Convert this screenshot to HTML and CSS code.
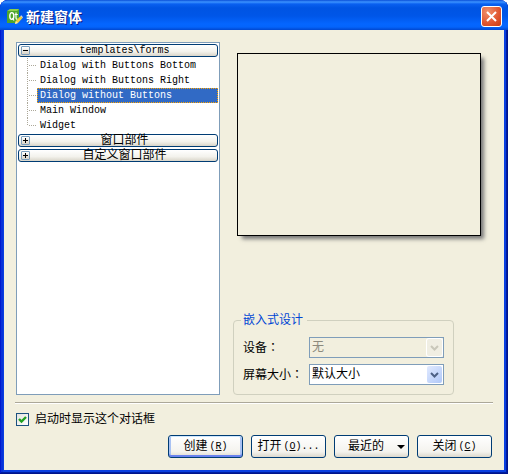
FILE: index.html
```
<!DOCTYPE html>
<html lang="zh-CN">
<head>
  <meta charset="UTF-8">
  <title>新建窗体</title>
  <link rel="stylesheet" href="styles.css">
</head>
<body>
<div class="window">
  <div class="titlebar">
    <svg class="logo" width="16" height="16" viewBox="0 0 16 16">
      <path d="M1 2 L3 0 H12 V12 L10 14 H0 V2 Z" fill="#4fa52c"/>
      <path d="M0 2 L3 0 H12 L10 2 Z" fill="#8ccf4d"/>
      <ellipse cx="4.8" cy="7" rx="2" ry="3.4" fill="none" stroke="#fff" stroke-width="1.4"/>
      <path d="M5.5 9 L7 11.5 M9 3.5 V9 Q9 10.3 10.5 10 M7.6 5.5 H10.8" fill="none" stroke="#fff" stroke-width="1.2"/>
      <path d="M8 15 L8.8 12 L13.5 7 L15.5 9 L11 14 Z" fill="#f2cf3c"/>
      <path d="M13.5 7 L14.3 6.3 L16 8.2 L15.5 9 Z" fill="#e8e4d8"/>
      <path d="M8 15 L8.8 12 L11 14 Z" fill="#f8e9b8"/>
    </svg>
    <h1>新建窗体</h1>
    <button class="close" type="button" aria-label="关闭窗口">
      <svg width="11" height="11" viewBox="0 0 11 11">
        <path d="M1 1 L10 10 M10 1 L1 10" stroke="#fff" stroke-width="2"/>
      </svg>
    </button>
  </div>

  <form class="content">
    <div class="main">
      <ul class="tree">
        <li>
          <button class="group" type="button"><i class="sign"></i><span class="en">templates\forms</span></button>
          <ul class="items">
            <li><button type="button">Dialog with Buttons Bottom</button></li>
            <li><button type="button">Dialog with Buttons Right</button></li>
            <li><button class="current" type="button">Dialog without Buttons</button></li>
            <li><button type="button">Main Window</button></li>
            <li><button type="button">Widget</button></li>
          </ul>
        </li>
        <li><button class="group" type="button"><i class="sign plus"></i><span>窗口部件</span></button></li>
        <li><button class="group" type="button"><i class="sign plus"></i><span>自定义窗口部件</span></button></li>
      </ul>

      <div class="side">
        <div class="preview"></div>
        <fieldset class="design">
          <legend>嵌入式设计</legend>
          <div class="fields">
            <label for="device">设备<span class="colon" lang="zh-TW">：</span></label>
            <div class="combo">
              <select id="device" disabled><option>无</option></select>
              <svg class="arrow off" width="15" height="17" viewBox="0 0 15 17">
                <path d="M4 7 L7.5 10.5 L11 7" fill="none" stroke="#c9c7ba" stroke-width="2"/>
              </svg>
            </div>
            <label for="screen">屏幕大小<span class="colon" lang="zh-TW">：</span></label>
            <div class="combo">
              <select id="screen"><option>默认大小</option></select>
              <svg class="arrow" width="15" height="17" viewBox="0 0 15 17">
                <path d="M4 7 L7.5 10.5 L11 7" fill="none" stroke="#4d6185" stroke-width="2"/>
              </svg>
            </div>
          </div>
        </fieldset>
      </div>
    </div>

    <hr>

    <label class="check"><input type="checkbox" checked>启动时显示这个对话框</label>

    <div class="buttons">
      <button class="btn default" type="button">创建<span class="en">(<u>R</u>)</span></button>
      <button class="btn" type="button">打开<span class="en">(<u>O</u>)...</span></button>
      <button class="btn menu" type="button"><span>最近的</span><i class="down"></i></button>
      <button class="btn" type="button">关闭<span class="en">(<u>C</u>)</span></button>
    </div>
  </form>
</div>
</body>
</html>
```
FILE: styles.css
```
* {
  margin: 0;
  padding: 0;
  box-sizing: border-box;
}

body {
  background: #fff;
  font: 12px/15px "Liberation Sans", "Noto Sans CJK SC", sans-serif;
  color: #000;
}

ul {
  list-style: none;
}

button, select, input {
  font: inherit;
  color: inherit;
}

svg {
  display: block;
}

.en {
  font-family: "Liberation Mono", monospace;
  font-size: 10px;
}

/* 冒号居中显示 */
.colon {
  font-family: "Noto Sans CJK TC", sans-serif;
}

.window {
  display: flex;
  flex-direction: column;
  min-height: 100vh;
  padding: 0 4px 4px;
  background: #0a3fe0;
  box-shadow: inset -1px -1px #00138c, inset 1px 0 #0019cf, inset -2px -2px #001ea0, inset 3px 0 #0831d9;
  border-radius: 8px 8px 0 0;
}

/* 标题栏 */
.titlebar {
  display: flex;
  align-items: center;
  height: 30px;
  margin: 0 -4px;
  padding: 3px 6px 0 7px;
  border-radius: 8px 8px 0 0;
  background: linear-gradient(#0a4fd8 0, #3c93ff 2px, #0a60f0 4px, #0054e3 8px, #0056e8 16px, #0466ff 24px, #0464fb 27px, #0047d0 30px);
}

.titlebar h1 {
  flex: 1;
  margin-left: 3px;
  font-size: 14px;
  line-height: 20px;
  font-weight: bold;
  color: #fff;
  text-shadow: 1px 1px #0a1883;
}

.close {
  display: grid;
  place-items: center;
  width: 21px;
  height: 21px;
  border: 1px solid #fff;
  border-radius: 3px;
  background: radial-gradient(circle at 30% 25%, #f0906c, #e0552f 60%, #c63c12);
}

.content {
  flex: 1;
  display: flex;
  flex-direction: column;
  padding: 12px 11px 12px;
  background: #f2efde;
}

.main {
  flex: 1;
  display: flex;
  gap: 13px;
  padding-left: 1px;
}

/* 左侧模板树 */
.tree {
  flex: 0 1 204px;
  padding: 0 1px;
  border: 1px solid #7f9db9;
  background: #fff;
}

.group {
  display: flex;
  align-items: center;
  width: 100%;
  height: 13px;
  margin: 1px 0;
  padding: 0 2px;
  border: 1px solid #003c74;
  border-radius: 3px;
  background: linear-gradient(#fff, #f3f2ec 60%, #d9d5c9);
  line-height: 13px;
}

.tree > li {
  display: flow-root;
}

.group span {
  flex: 1;
  padding-left: 4px;
  white-space: nowrap;
}

.sign {
  width: 9px;
  height: 9px;
  border: 1px solid #7b9ebd;
  border-radius: 1px;
  background: linear-gradient(#000, #000) center / 5px 1px no-repeat, linear-gradient(#fff, #d8d3c7);
}

.sign.plus {
  background: linear-gradient(#000, #000) center / 5px 1px no-repeat, linear-gradient(#000, #000) center / 1px 5px no-repeat, linear-gradient(#fff, #d8d3c7);
}

.items {
  padding-left: 9px;
}

.items li {
  padding-left: 10px;
  background:
    repeating-linear-gradient(#aca899 0 1px, #fff 1px 2px) 0 0 / 1px 15px no-repeat,
    repeating-linear-gradient(90deg, #aca899 0 1px, #fff 1px 2px) 0 7px / 10px 1px no-repeat;
}

.items li:last-child {
  background-size: 1px 8px, 10px 1px;
}

.items button {
  display: block;
  width: 100%;
  height: 15px;
  padding-left: 2px;
  border: 1px solid transparent;
  background: none;
  font: 10px/13px "Liberation Mono", monospace;
  text-align: left;
  white-space: nowrap;
}

.items .current {
  border: 1px dotted #ffa500;
  background: #316ac5;
  color: #fff;
}

/* 右侧预览 */
.side {
  flex: 1;
  display: flex;
  flex-direction: column;
  justify-content: space-between;
  align-items: flex-start;
}

.preview {
  align-self: stretch;
  aspect-ratio: 4 / 3;
  margin: 11px 12px 0 4px;
  border: 1px solid #000;
  box-shadow: 4px 4px 4px -1px #777;
}

.design {
  padding: 9px 9px 9px;
  border: 1px solid #d0d0bf;
  border-radius: 4px;
}

.design legend {
  margin-left: -2px;
  padding: 0 4px 0 2px;
  color: #0046d5;
}

.fields {
  display: grid;
  grid-template-columns: 66px 135px;
  gap: 6px 0;
  align-items: center;
}

.combo {
  display: grid;
  align-items: center;
}

.combo select, .combo .arrow {
  grid-area: 1 / 1;
}

.combo select {
  appearance: none;
  width: 100%;
  height: 21px;
  padding: 0 20px 0 2px;
  border: 1px solid #7f9db9;
  border-radius: 0;
  background: #fff;
}

.combo select:disabled {
  background: transparent;
  color: #8c8a7d;
  opacity: 1;
}

.combo .arrow {
  justify-self: end;
  margin-right: 2px;
  border-radius: 2px;
  background: linear-gradient(135deg, #e1eaff, #b0c8f8);
  pointer-events: none;
}

.combo .arrow.off {
  background: #f0eee3;
  box-shadow: 0 0 0 1px #fff;
}

hr {
  margin: 7px 0 8px;
  border: 0;
  border-top: 1px solid #aca899;
  border-bottom: 1px solid #fff;
}

.check {
  display: flex;
  align-items: center;
  align-self: flex-start;
  gap: 6px;
  padding-left: 1px;
}

.check input {
  appearance: none;
  width: 13px;
  height: 13px;
  border: 1px solid #1c5180;
  background: linear-gradient(135deg, #dcdcd7, #fff);
}

.check input:checked {
  background: url("data:image/svg+xml,%3Csvg xmlns='http://www.w3.org/2000/svg' viewBox='0 0 11 11'%3E%3Cpath d='M2 5 L4.5 7.5 L9 3' fill='none' stroke='%2321a121' stroke-width='2.4'/%3E%3C/svg%3E") center / 11px 11px no-repeat, linear-gradient(135deg, #e4e4df, #fff);
}

.buttons {
  display: flex;
  justify-content: flex-end;
  gap: 8px;
  margin-top: 8px;
  padding-right: 1px;
}

.btn {
  display: flex;
  align-items: center;
  justify-content: center;
  gap: 2px;
  width: 75px;
  height: 23px;
  border: 1px solid #003c74;
  border-radius: 3px;
  background: linear-gradient(#fff, #f4f3ee 75%, #dcd8cc);
  white-space: nowrap;
}

.btn.default {
  box-shadow: inset 0 1px #cee7ff, inset 0 -2px #6982ee, inset 2px 0 #a9c2f3, inset -2px 0 #a9c2f3;
}

.btn.menu {
  justify-content: space-between;
  padding: 0 3px 0 13px;
}

.down {
  border: 4px solid transparent;
  border-top-color: #000;
  border-bottom: 0;
}
```
